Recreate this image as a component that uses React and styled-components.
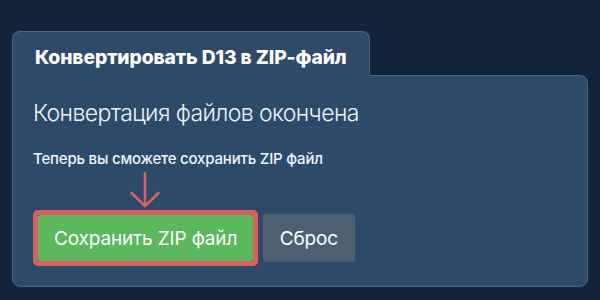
import React from "react";
import styled, { createGlobalStyle } from "styled-components";

const Global = createGlobalStyle`
  html, body { margin: 0; padding: 0; background: #12233a; }
  body { font-family: Inter, "Noto Sans", sans-serif; }
`;

const Page = styled.div`
  width: 600px;
  height: 300px;
  box-sizing: border-box;
  padding: 31px 12px 0 12px;
  background: #12233a;
`;

const Tab = styled.div`
  display: inline-flex;
  align-items: center;
  height: 45px;
  padding: 6px 22px 0 22px;
  box-sizing: border-box;
  background: #2d4a6a;
  border: 1px solid #4a6584;
  border-bottom: none;
  border-radius: 8px 8px 0 0;
  position: relative;
  z-index: 1;
  margin-bottom: -1px;
  color: #ffffff;
  font-size: 19.3px;
  font-weight: 800;
  letter-spacing: -0.1px;
`;

const Body = styled.div`
  background: #2d4a6a;
  border: 1px solid #4a6584;
  border-radius: 0 8px 8px 8px;
  padding: 22px 20px 20px 20px;
  display: flex;
  flex-direction: column;
  align-items: flex-start;
`;

const Heading = styled.div`
  font-size: 23px;
  line-height: 30px;
  font-weight: 300;
  color: #eef2f6;
  letter-spacing: -0.6px;
`;

const Note = styled.div`
  margin-top: 21px;
  font-size: 15px;
  line-height: 20px;
  font-weight: 500;
  color: #f2f4f7;
  letter-spacing: -0.2px;
`;

const ArrowBox = styled.div`
  width: 224px;
  height: 36px;
  margin-top: 3px;
  display: flex;
  justify-content: center;
`;

const Actions = styled.div`
  margin-top: 2px;
  display: flex;
  align-items: center;
  gap: 5px;
`;

const Highlight = styled.div`
  border: 5px solid #dc5f5a;
  border-radius: 5px;
  display: flex;
`;

const Button = styled.button`
  height: ${(p) => (p.$h ? p.$h : 46)}px;
  padding: 0 ${(p) => (p.$px ? p.$px : 16)}px;
  border: none;
  border-radius: ${(p) => (p.$r ? p.$r : 4)}px;
  background: ${(p) => p.$bg};
  color: #ffffff;
  font-family: Inter, "Noto Sans", sans-serif;
  font-size: 19px;
  font-weight: 400;
  letter-spacing: -0.15px;
  cursor: pointer;
`;

const Arrow = () => (
  <svg width="32" height="36" viewBox="0 0 32 36">
    <g stroke="#dc5f5a" strokeWidth="2.6" fill="none" strokeLinecap="round" strokeLinejoin="round">
      <line x1="16" y1="1" x2="16" y2="34" />
      <polyline points="2.5,21 16,34 29.5,21" />
    </g>
  </svg>
);

export default function App() {
  return (
    <>
      <Global />
      <Page>
        <Tab>Конвертировать D13 в ZIP-файл</Tab>
        <Body>
          <Heading>Конвертация файлов окончена</Heading>
          <Note>Теперь вы сможете сохранить ZIP файл</Note>
          <ArrowBox>
            <Arrow />
          </ArrowBox>
          <Actions>
            <Highlight>
              <Button $bg="#5cb85c" $r={2}>Сохранить ZIP файл</Button>
            </Highlight>
            <Button $bg="#4f5f70" $h={48} $px={16.5}>Сброс</Button>
          </Actions>
        </Body>
      </Page>
    </>
  );
}
